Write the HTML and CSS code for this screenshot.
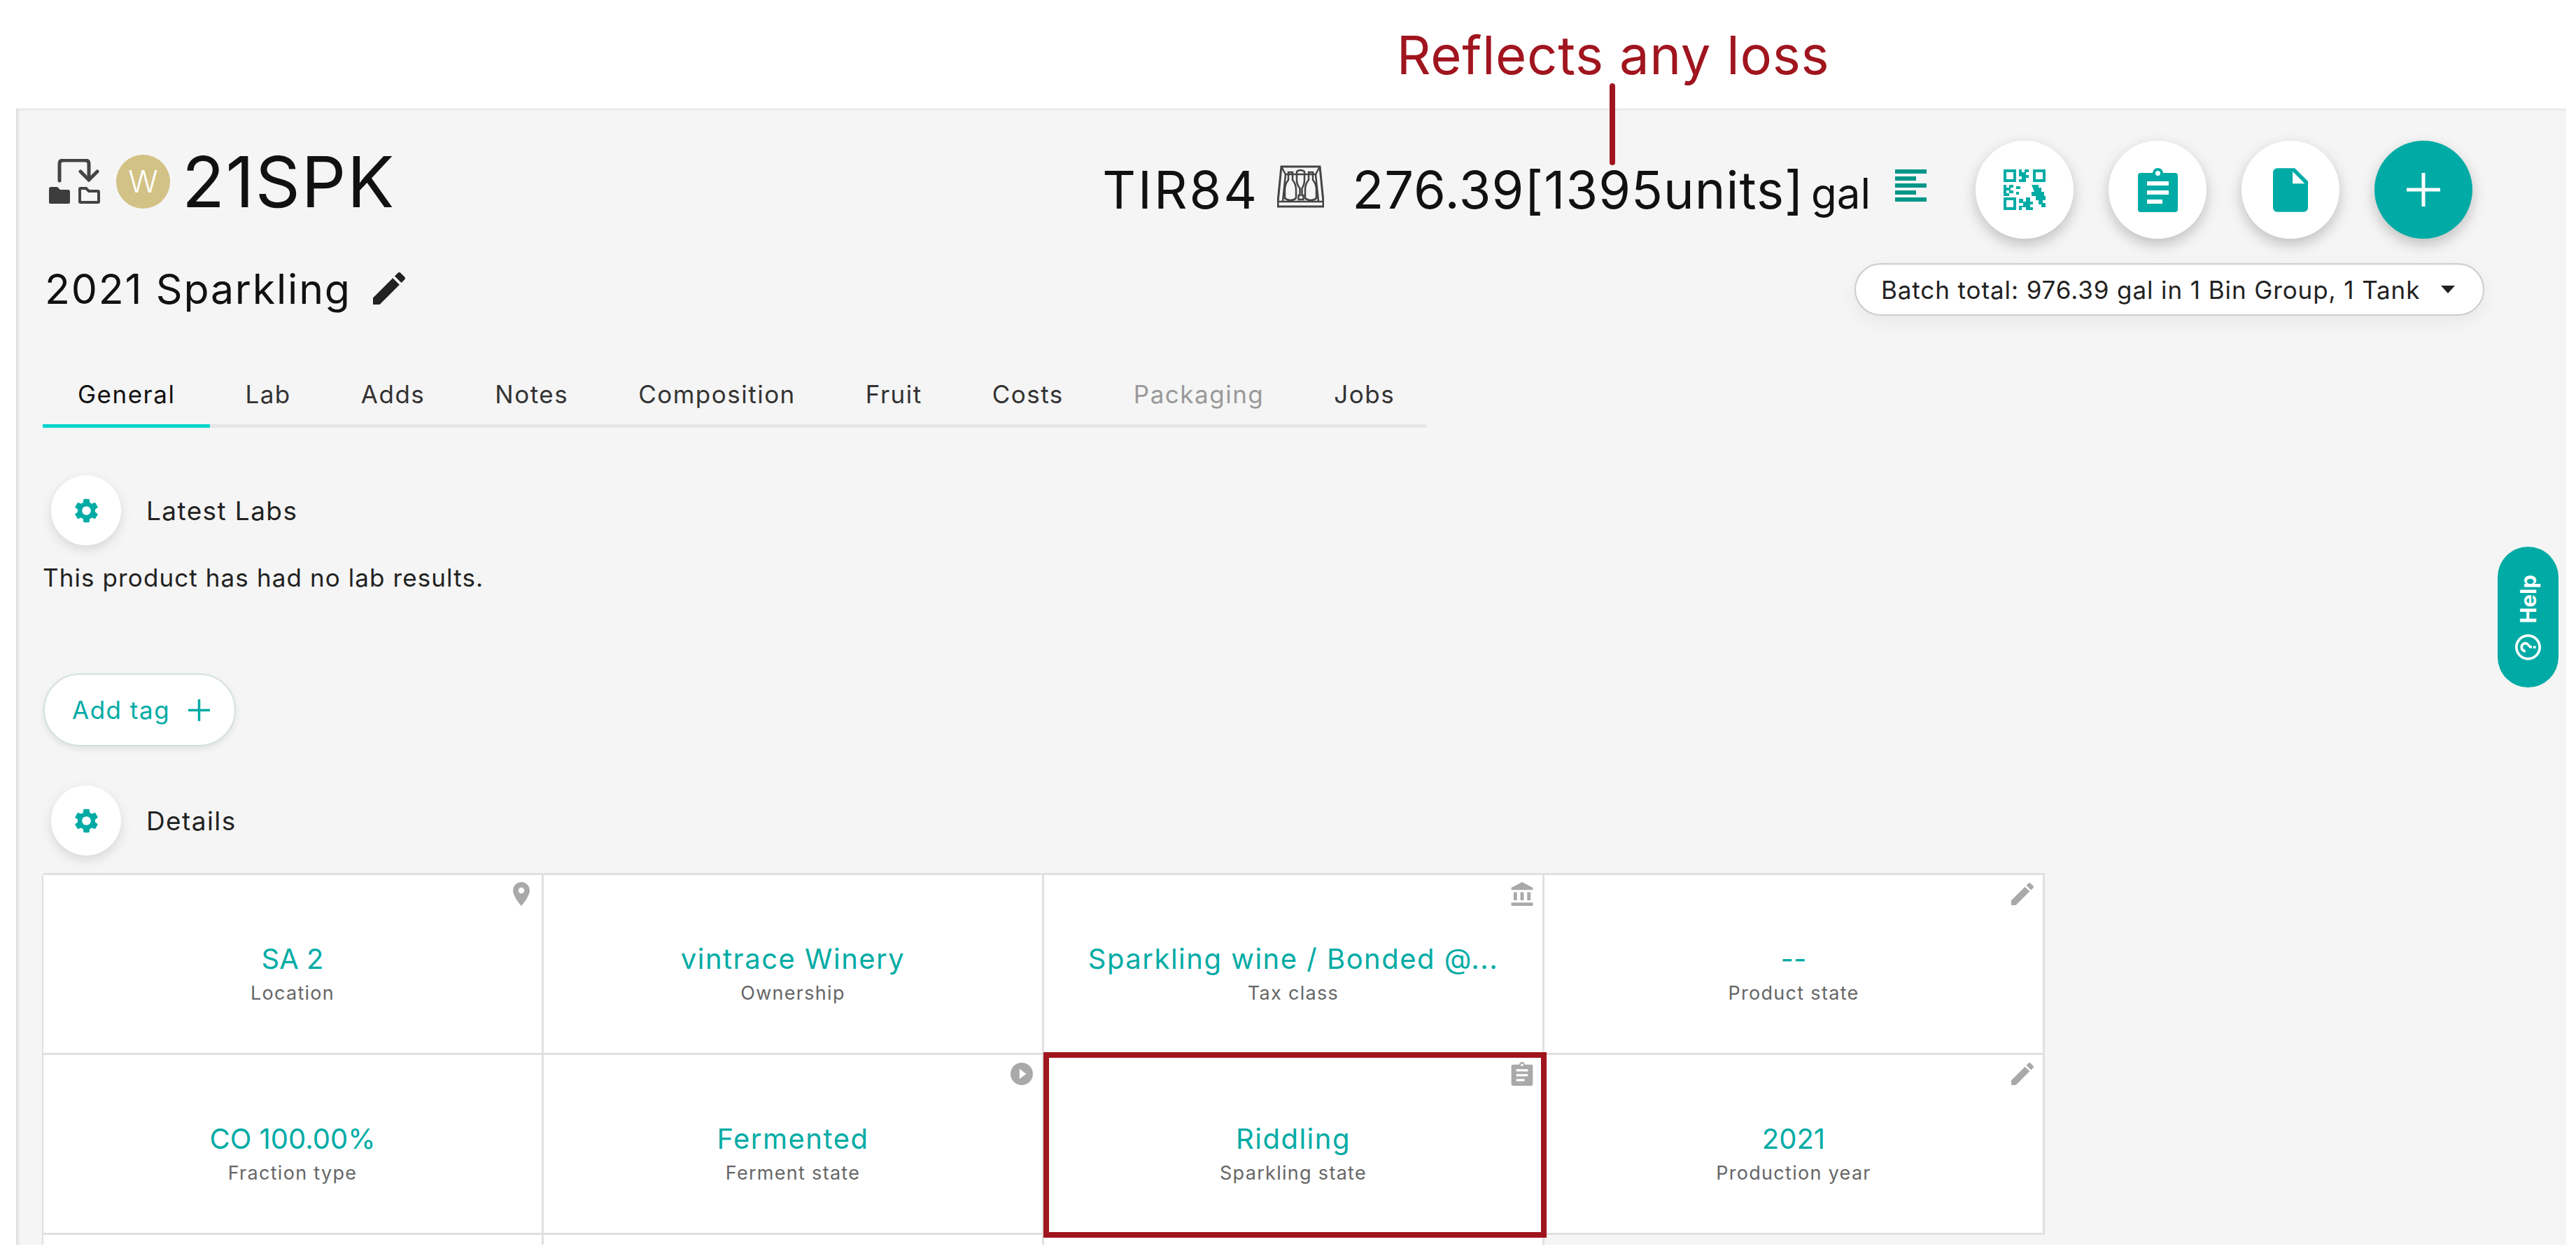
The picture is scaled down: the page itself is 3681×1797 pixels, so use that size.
FILE: index.html
```html
<!DOCTYPE html>
<html lang="en">
<head>
    <meta charset="UTF-8">
    <meta name="viewport" content="width=device-width, initial-scale=1.0">
    <title>21SPK - 2021 Sparkling</title>
    <link rel="stylesheet" href="styles.css">
</head>
<body>

<div class="callout">Reflects any loss</div>
<div class="callout-line"></div>

<div class="panel">
    <div class="head">
        <div class="head-left">
            <div class="title-row">
                <svg class="move-icon" viewBox="0 0 74 65">
                    <path d="M16 31V7q0-5 5-5h32q5 0 5 5v23" fill="none" stroke="#444" stroke-width="5" stroke-linecap="round"/>
                    <path d="M46 18l12 12 12-12" fill="none" stroke="#444" stroke-width="5" stroke-linecap="round" stroke-linejoin="round"/>
                    <path d="M1 43q0-3 3-3h9l4 4h11q3 0 3 3v15q0 2-2 2H3q-2 0-2-2z" fill="#3d3d3d"/>
                    <path d="M45 43q0-1 1-1h8l4 4h13q1 0 1 1v14q0 1-1 1H46q-1 0-1-1z" fill="none" stroke="#444" stroke-width="4"/>
                </svg>
                <div class="avatar">W</div>
                <h1 class="batch-code">21SPK</h1>
            </div>
            <div class="name-row">
                <span class="batch-name">2021 Sparkling</span>
                <svg class="name-edit" viewBox="3 3 18 18"><path d="M3 17.25V21h3.75L17.81 9.94l-3.75-3.75L3 17.25zM20.71 7.04c.39-.39.39-1.02 0-1.41l-2.34-2.34c-.39-.39-1.02-.39-1.41 0l-1.83 1.83 3.75 3.75 1.83-1.83z"/></svg>
            </div>
        </div>
        <div class="head-right">
            <div class="action-row">
                <span class="vessel">TIR84</span>
                <svg class="bottle-icon" viewBox="0 0 67 61" fill="none" stroke="#444" stroke-width="2.5">
                    <path d="M6 2h55l5 50v7H1v-7z" stroke-width="3"/>
                    <path d="M1 52h65M6 2l6 11h43l6-11M12 13L8 52M55 13l4 39"/>
                    <path d="M16 10h6v11q5 6 5 14v12q-3 3-8 3t-8-3V35q0-8 5-14z"/>
                    <path d="M28 9q5-4 11 0v12q0 7-3.500 12v10h2v6h-7v-6h2V33Q28 28 28 21z"/>
                    <path d="M45 10h6v11q5 6 5 14v12q-3 3-8 3t-8-3V35q0-8 5-14z"/>
                </svg>
                <span class="volume">276.39[1395units]</span>
                <span class="unit">gal</span>
                <div class="list-icon"><i></i><i class="short"></i><i></i><i class="short"></i><i></i></div>
                <button class="round-btn" type="button">
                    <svg class="qr" viewBox="0 0 30 29" fill="#00aba5">
                        <path fill-rule="evenodd" d="M0 0h9v9H0zM2 2v5h5V2zM21 0h9v9h-9zM23 2v5h5V2zM0 20h9v9H0zM2 22v5h5v-5z"/>
                        <path d="M11 0h2v2h2v-2h3v2h-2v2h2v2h-2v3h-5V7h2V5h-2zM0 11h2v2h2v-2h3v2H5v2h2v2H4v-2H2v2h2v2H0zM9 12h3v2H9zM9 16h2v2H9zM20 11h5v2h2v3h2v3h1v3h-2v2h2v3h-3v-2h-2v-3h-2v-3h-3v-3h2zM11 21h3v2h2v-3h3v3h2v2h-2v2h2v2h-5v-2h-3v2h-2v-3h3v-2h-3z"/>
                    </svg>
                </button>
                <button class="round-btn" type="button">
                    <svg class="clip" viewBox="0 0 57 63">
                        <path fill="#00aba5" fill-rule="evenodd" d="M4 7h17q1-7 7.500-7T36 7h17q4 0 4 4v48q0 4-4 4H4q-4 0-4-4V11q0-4 4-4zM28.500 4a3.500 3.500 0 1 0 0 7 3.500 3.500 0 0 0 0-7zM13 19v6h31v-6zM13 32v6h31v-6zM13 45v6h22v-6z"/>
                    </svg>
                </button>
                <button class="round-btn" type="button">
                    <svg class="file" viewBox="4 2 16 20"><path fill="#00aba5" d="M6 2c-1.100 0-1.990.9-1.990 2L4 20c0 1.100.89 2 1.990 2H18c1.100 0 2-.9 2-2V8l-6-6H6zm7 7V3.500L18.500 9H13z"/></svg>
                </button>
                <button class="round-btn add" type="button">
                    <svg class="plus" viewBox="0 0 48 48"><path d="M24 0v48M0 24h48" stroke="#fff" stroke-width="5"/></svg>
                </button>
            </div>
            <div class="batch-total">
                <span>Batch total: 976.39 gal in 1 Bin Group, 1 Tank</span>
                <span class="caret"></span>
            </div>
        </div>
    </div>

    <div class="tabs">
        <a class="tab active">General</a>
        <a class="tab">Lab</a>
        <a class="tab">Adds</a>
        <a class="tab">Notes</a>
        <a class="tab">Composition</a>
        <a class="tab">Fruit</a>
        <a class="tab">Costs</a>
        <a class="tab disabled">Packaging</a>
        <a class="tab">Jobs</a>
    </div>

    <div class="section-head first">
        <div class="gear-btn"><svg viewBox="2.500 2 19 20"><path d="M19.140 12.940c.04-.3.06-.61.06-.94 0-.32-.02-.64-.07-.94l2.030-1.580c.18-.14.23-.41.12-.61l-1.920-3.320c-.12-.22-.37-.29-.59-.22l-2.390.96c-.5-.38-1.030-.7-1.620-.94l-.36-2.540c-.04-.24-.24-.41-.48-.41h-3.840c-.24 0-.43.17-.47.41l-.36 2.540c-.59.24-1.130.57-1.620.94l-2.390-.96c-.22-.08-.47 0-.59.22L2.740 8.870c-.12.21-.08.47.12.61l2.030 1.580c-.05.3-.09.63-.09.94s.02.64.07.94l-2.030 1.580c-.18.14-.23.41-.12.61l1.920 3.320c.12.22.37.29.59.22l2.390-.96c.5.38 1.030.7 1.620.94l.36 2.540c.05.24.24.41.48.41h3.840c.24 0 .44-.17.47-.41l.36-2.540c.59-.24 1.130-.56 1.620-.94l2.390.96c.22.08.47 0 .59-.22l1.920-3.320c.12-.22.07-.47-.12-.61l-2.010-1.580zM12 15.600c-1.980 0-3.600-1.620-3.600-3.600s1.620-3.600 3.600-3.600 3.600 1.620 3.600 3.600-1.620 3.600-3.600 3.600z"/></svg></div>
        <span class="section-title">Latest Labs</span>
    </div>
    <p class="no-results">This product has had no lab results.</p>

    <button class="add-tag" type="button">
        <span>Add tag</span>
        <svg viewBox="0 0 31 31"><path d="M15.500 0v31M0 15.500h31" stroke="#00aba5" stroke-width="3.500"/></svg>
    </button>

    <div class="section-head details">
        <div class="gear-btn"><svg viewBox="2.500 2 19 20"><path d="M19.140 12.940c.04-.3.06-.61.06-.94 0-.32-.02-.64-.07-.94l2.030-1.580c.18-.14.23-.41.12-.61l-1.920-3.320c-.12-.22-.37-.29-.59-.22l-2.390.96c-.5-.38-1.030-.7-1.620-.94l-.36-2.540c-.04-.24-.24-.41-.48-.41h-3.840c-.24 0-.43.17-.47.41l-.36 2.540c-.59.24-1.130.57-1.620.94l-2.390-.96c-.22-.08-.47 0-.59.22L2.740 8.870c-.12.21-.08.47.12.61l2.030 1.580c-.05.3-.09.63-.09.94s.02.64.07.94l-2.030 1.580c-.18.14-.23.41-.12.61l1.920 3.320c.12.22.37.29.59.22l2.390-.96c.5.38 1.030.7 1.620.94l.36 2.540c.05.24.24.41.48.41h3.840c.24 0 .44-.17.47-.41l.36-2.540c.59-.24 1.130-.56 1.620-.94l2.390.96c.22.08.47 0 .59-.22l1.920-3.320c.12-.22.07-.47-.12-.61l-2.010-1.580zM12 15.600c-1.980 0-3.600-1.620-3.600-3.600s1.620-3.600 3.600-3.600 3.600 1.620 3.600 3.600-1.620 3.600-3.600 3.600z"/></svg></div>
        <span class="section-title">Details</span>
    </div>

    <div class="grid">
        <div class="cell">
            <svg class="cell-icon" viewBox="5 2 14 20"><path d="M12 2C8.130 2 5 5.130 5 9c0 5.250 7 13 7 13s7-7.750 7-13c0-3.870-3.130-7-7-7zm0 9.500c-1.380 0-2.500-1.120-2.500-2.500s1.120-2.500 2.500-2.500 2.500 1.120 2.500 2.500-1.120 2.500-2.500 2.500z"/></svg>
            <div class="value num">SA 2</div>
            <div class="label">Location</div>
        </div>
        <div class="cell">
            <div class="value">vintrace Winery</div>
            <div class="label">Ownership</div>
        </div>
        <div class="cell">
            <svg class="cell-icon" viewBox="2 1 19 21"><path d="M4 10v7h3v-7H4zm6 0v7h3v-7h-3zM2 22h19v-3H2v3zm14-12v7h3v-7h-3zm-4.500-9L2 6v2h19V6l-9.500-5z"/></svg>
            <div class="value">Sparkling wine / Bonded @...</div>
            <div class="label">Tax class</div>
        </div>
        <div class="cell">
            <svg class="cell-icon" viewBox="3 3 18 18"><path d="M3 17.250V21h3.750L17.810 9.940l-3.750-3.750L3 17.250zM20.710 7.040c.39-.39.39-1.020 0-1.410l-2.340-2.340c-.39-.39-1.020-.39-1.410 0l-1.830 1.830 3.750 3.750 1.830-1.830z"/></svg>
            <div class="value num">--</div>
            <div class="label">Product state</div>
        </div>
        <div class="cell">
            <div class="value num">CO 100.00%</div>
            <div class="label">Fraction type</div>
        </div>
        <div class="cell">
            <svg class="cell-icon" viewBox="2 2 20 20"><path d="M12 2C6.480 2 2 6.480 2 12s4.480 10 10 10 10-4.480 10-10S17.520 2 12 2zm-2 14.500v-9l6 4.500-6 4.500z"/></svg>
            <div class="value">Fermented</div>
            <div class="label">Ferment state</div>
        </div>
        <div class="cell marked">
            <svg class="cell-icon" viewBox="0 0 57 63"><path fill-rule="evenodd" d="M4 7h17q1-7 7.500-7T36 7h17q4 0 4 4v48q0 4-4 4H4q-4 0-4-4V11q0-4 4-4zM28.500 4a3.500 3.500 0 1 0 0 7 3.500 3.500 0 0 0 0-7zM13 19v6h31v-6zM13 32v6h31v-6zM13 45v6h22v-6z"/></svg>
            <div class="value">Riddling</div>
            <div class="label">Sparkling state</div>
        </div>
        <div class="cell">
            <svg class="cell-icon" viewBox="3 3 18 18"><path d="M3 17.250V21h3.750L17.810 9.940l-3.750-3.750L3 17.250zM20.710 7.040c.39-.39.39-1.020 0-1.410l-2.340-2.340c-.39-.39-1.020-.39-1.410 0l-1.830 1.830 3.750 3.750 1.830-1.830z"/></svg>
            <div class="value num">2021</div>
            <div class="label">Production year</div>
        </div>
        <div class="cell"></div>
        <div class="cell"></div>
        <div class="cell"></div>
    </div>

    <div class="help-tab">
        <span>Help</span>
        <svg viewBox="2 2 20 20"><path d="M11 18h2v-2h-2v2zm1-16C6.480 2 2 6.480 2 12s4.480 10 10 10 10-4.480 10-10S17.520 2 12 2zm0 18c-4.410 0-8-3.590-8-8s3.590-8 8-8 8 3.590 8 8-3.590 8-8 8zm0-14c-2.210 0-4 1.790-4 4h2c0-1.100.9-2 2-2s2 .9 2 2c0 2-3 1.750-3 5h2c0-2.250 3-2.500 3-5 0-2.210-1.790-4-4-4z"/></svg>
    </div>
</div>

</body>
</html>
```

FILE: styles.css
```css
html, body {
    margin: 0;
    height: 1797px;
    overflow: hidden;
}
body {
    font-family: Inter, "Liberation Sans", sans-serif;
    background-color: #fff;
    color: #222;
    position: relative;
}
.callout {
    position: absolute;
    top: 33px;
    left: 1955px;
    width: 700px;
    text-align: center;
    font-size: 76px;
    letter-spacing: 0.7px;
    line-height: 90px;
    white-space: nowrap;
    color: #a0151e;
    z-index: 3;
}
.callout-line {
    position: absolute;
    top: 119px;
    left: 2300px;
    width: 8px;
    height: 117px;
    border-radius: 4px;
    background-color: #a0151e;
    z-index: 3;
}
.panel {
    position: relative;
    margin: 155px 14px 0 23px;
    height: 1623px;
    overflow: hidden;
    background-color: #f5f5f5;
    box-shadow: inset 4px 2px 4px -1px rgba(0, 0, 0, 0.1);
}

/* header */
.head {
    display: flex;
    justify-content: space-between;
    padding-right: 117px;
    height: 322px;
}
.head-left {
    padding: 66px 0 0 46px;
}
.title-row {
    display: flex;
    align-items: center;
    height: 77px;
}
.move-icon {
    width: 74px;
    height: 65px;
    margin-right: 23px;
}
.avatar {
    width: 77px;
    height: 77px;
    border-radius: 50%;
    background-color: #d2c285;
    color: #fff;
    font-size: 44px;
    font-weight: 300;
    line-height: 77px;
    text-align: center;
    margin-right: 17px;
}
.batch-code {
    margin: 0;
    font-size: 100px;
    letter-spacing: 1.6px;
    font-weight: 400;
    line-height: 77px;
    color: #111;
}
.name-row {
    display: flex;
    align-items: center;
    height: 70px;
    margin: 79px 0 0 -5px;
}
.batch-name {
    font-size: 59px;
    letter-spacing: 1.8px;
    color: #111;
}
.name-edit {
    width: 46px;
    height: 46px;
    margin-left: 31px;
    fill: #222;
}
.head-right {
    display: flex;
    flex-direction: column;
    align-items: flex-end;
    padding-top: 46px;
}
.action-row {
    display: flex;
    align-items: center;
    height: 140px;
    margin-right: 17px;
    color: #111;
}
.vessel {
    font-size: 74px;
    letter-spacing: 3px;
}
.bottle-icon {
    width: 67px;
    height: 61px;
    margin: -10px 40px 0 26px;
}
.volume {
    font-size: 74px;
    letter-spacing: 1px;
}
.unit {
    font-size: 60px;
    margin: 10px 35px 0 10px;
}
.list-icon {
    width: 45px;
    height: 46px;
    margin: -12px 70px 0 0;
    display: flex;
    flex-direction: column;
    justify-content: space-between;
}
.list-icon i {
    display: block;
    height: 6px;
    background-color: #009688;
}
.list-icon i.short {
    width: 30px;
}
.round-btn {
    width: 140px;
    height: 140px;
    border: none;
    border-radius: 50%;
    padding: 0;
    margin-left: 50px;
    background-color: #fff;
    box-shadow: 0 8px 20px rgba(0, 0, 0, 0.22);
    display: flex;
    align-items: center;
    justify-content: center;
}
.list-icon + .round-btn {
    margin-left: 0;
}
.round-btn.add {
    background-color: #00aba5;
}
.qr {
    width: 60px;
    height: 58px;
}
.clip {
    width: 57px;
    height: 63px;
}
.file {
    width: 50px;
    height: 63px;
}
.plus {
    width: 48px;
    height: 48px;
}
.batch-total {
    display: flex;
    align-items: center;
    box-sizing: border-box;
    width: 900px;
    height: 75px;
    margin-top: 35px;
    padding: 0 40px 0 36px;
    border: 2px solid #ccc;
    border-radius: 38px;
    background-color: #fff;
    box-shadow: 0 8px 24px rgba(0, 0, 0, 0.06);
    font-size: 35px;
    letter-spacing: 0.9px;
    white-space: nowrap;
}
.caret {
    margin-left: auto;
    border-style: solid;
    border-width: 11px 10px 0;
    border-color: #222 transparent transparent;
}

/* tabs */
.tabs {
    display: flex;
    width: 1977px;
    margin-left: 38px;
    margin-top: 47px;
    border-bottom: 5px solid #e6e6e6;
}
.tab {
    padding: 0 50px;
    height: 82px;
    margin-bottom: -5px;
    border-bottom: 5px solid transparent;
    box-sizing: content-box;
    font-size: 35px;
    letter-spacing: 1.5px;
    line-height: 79px;
    color: #333;
}
.tab.active {
    color: #111;
    border-bottom-color: #00d4cc;
}
.tab.disabled {
    color: #999;
}

/* sections */
.section-head {
    display: flex;
    align-items: center;
    margin-left: 50px;
}
.section-head.first {
    margin-top: 68px;
}
.section-head.details {
    margin-top: 56px;
}
.gear-btn {
    width: 100px;
    height: 100px;
    border-radius: 50%;
    background-color: #fff;
    box-shadow: 0 6px 16px rgba(0, 0, 0, 0.12);
    display: flex;
    align-items: center;
    justify-content: center;
}
.gear-btn svg {
    width: 33px;
    height: 35px;
    fill: #00aba5;
}
.section-title {
    font-size: 37px;
    letter-spacing: 1.4px;
    margin-left: 36px;
}
.no-results {
    margin: 21px 0 0 38px;
    font-size: 35px;
    letter-spacing: 1.1px;
    line-height: 50px;
}
.add-tag {
    display: flex;
    align-items: center;
    box-sizing: border-box;
    width: 275px;
    height: 104px;
    margin: 112px 0 0 39px;
    padding: 0 0 0 39px;
    border: 2px solid #d5e0e0;
    border-radius: 52px;
    background-color: #fff;
    box-shadow: 0 4px 10px rgba(0, 0, 0, 0.08);
    font-family: inherit;
    font-size: 35px;
    letter-spacing: 1.5px;
    color: #00aba5;
}
.add-tag svg {
    width: 31px;
    height: 31px;
    margin-left: 26px;
}

/* detail cells */
.grid {
    display: grid;
    grid-template-columns: repeat(4, 715px);
    grid-auto-rows: 257px;
    margin: 25px 0 0 39px;
    width: 2860px;
    border-top: 3px solid #e0e0e0;
    box-sizing: border-box;
}
.cell {
    position: relative;
    display: flex;
    flex-direction: column;
    align-items: center;
    justify-content: center;
    box-sizing: border-box;
    padding-top: 28px;
    border-right: 3px solid #e0e0e0;
    border-bottom: 3px solid #e0e0e0;
    background-color: #fff;
}
.cell:nth-child(4n+1) {
    margin-left: -2px;
    border-left: 2px solid #e0e0e0;
}
.cell-icon {
    position: absolute;
    top: 10px;
    right: 13px;
    width: 32px;
    height: 34px;
    fill: #a9a9a9;
}
.value {
    font-size: 40px;
    letter-spacing: 1.5px;
    line-height: 52px;
    color: #00aba5;
    white-space: nowrap;
}
.value.num {
    letter-spacing: 0;
}
.label {
    font-size: 27px;
    letter-spacing: 1.3px;
    line-height: 38px;
    margin-top: 4px;
    color: #666;
}
.cell.marked {
    z-index: 1;
}
.cell.marked::after {
    content: "";
    position: absolute;
    top: -4px;
    left: -1px;
    right: -6px;
    bottom: -7px;
    border: 8px solid #a0151e;
}

/* floating help */
.help-tab {
    position: absolute;
    top: 626px;
    left: 3546px;
    box-sizing: border-box;
    width: 87px;
    height: 201px;
    border-radius: 44px;
    background-color: #00aba5;
    color: #fff;
    display: flex;
    flex-direction: column;
    align-items: center;
    padding-top: 40px;
}
.help-tab span {
    writing-mode: vertical-rl;
    transform: rotate(180deg);
    font-size: 31px;
    font-weight: 700;
    line-height: 30px;
}
.help-tab svg {
    width: 37px;
    height: 37px;
    margin-top: 15px;
    fill: #fff;
    transform: rotate(-90deg);
}
```
